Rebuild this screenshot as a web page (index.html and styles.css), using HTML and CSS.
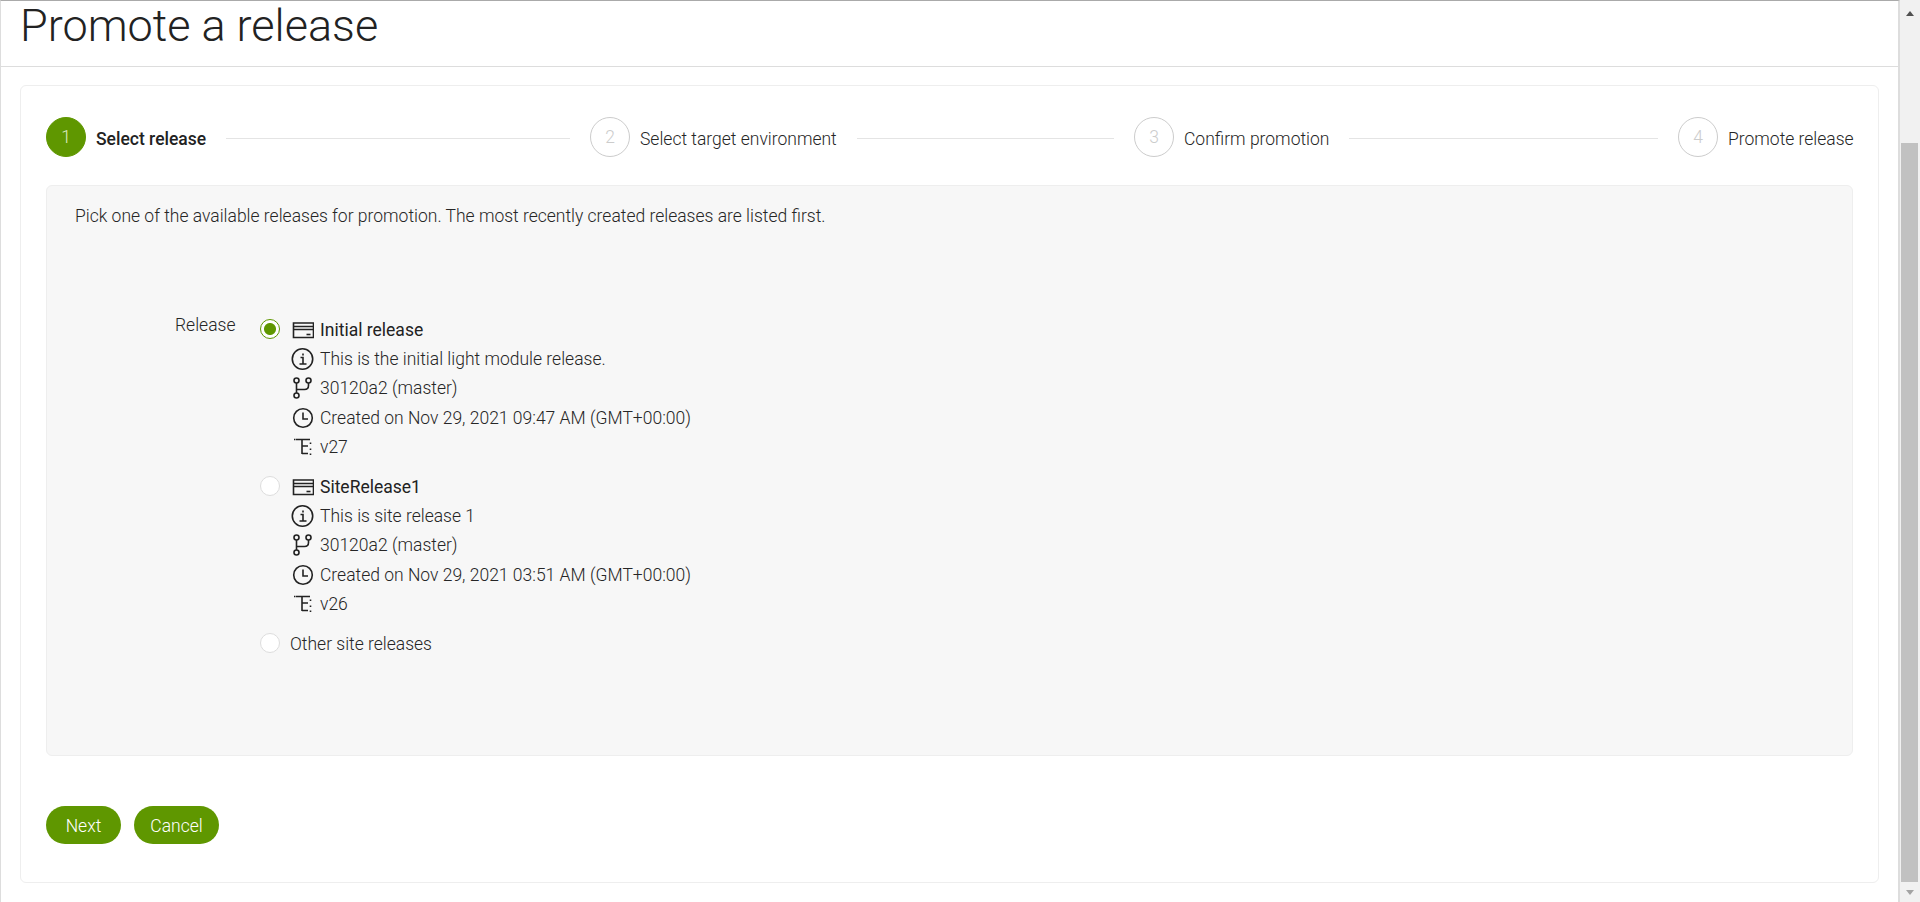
FILE: index.html
```html
<!DOCTYPE html>
<html lang="en">
<head>
<meta charset="UTF-8" />
<title>Promote a release</title>
<link rel="stylesheet" href="styles.css">
</head>
<body>

<div class="page">
  <main class="content">
    <header class="page-head">
      <h1>Promote a release</h1>
    </header>

    <section class="card">
      <ol class="steps">
        <li class="step active"><span class="num">1</span><span class="step-label">Select release</span><span class="line"></span></li>
        <li class="step"><span class="num">2</span><span class="step-label">Select target environment</span><span class="line"></span></li>
        <li class="step"><span class="num">3</span><span class="step-label">Confirm promotion</span><span class="line"></span></li>
        <li class="step last"><span class="num">4</span><span class="step-label">Promote release</span></li>
      </ol>

      <div class="panel">
        <p class="intro">Pick one of the available releases for promotion. The most recently created releases are listed first.</p>

        <div class="form-row">
          <div class="form-label">Release</div>
          <div class="options">

            <div class="option">
              <span class="radio checked"></span>
              <div class="details">
                <div class="row name">
                  <svg class="icon" viewBox="0 0 23 22"><path d="M2.500 4h20v14.500h-20zM2.500 7.500h20M2.500 10.500h20" /><path d="M15.500 15.500h4" /></svg>
                  Initial release
                </div>
                <div class="row">
                  <svg class="icon" viewBox="0 0 23 22"><circle cx="11.500" cy="11" r="10.200" /><path d="M9.500 9.500h2.500v6.500M8.500 16h7M12 5.500v2" /></svg>
                  This is the initial light module release.
                </div>
                <div class="row">
                  <svg class="icon" viewBox="0 0 23 22"><circle cx="5.500" cy="3.500" r="2.500" /><circle cx="5.500" cy="18.500" r="2.500" /><circle cx="17.500" cy="3.500" r="2.500" /><path d="M5.500 6v10M5.500 12.500h8q4 0 4-4V6" /></svg>
                  30120a2 (master)
                </div>
                <div class="row">
                  <svg class="icon" viewBox="0 0 23 22"><circle cx="12" cy="11" r="9.300" /><path d="M12 5.500V12h5" /></svg>
                  Created on Nov 29, 2021 09:47 AM (GMT+00:00)
                </div>
                <div class="row">
                  <svg class="icon" viewBox="0 0 23 22"><path d="M5 3.500h14M11 3.500V18M11 10h6M11 17.500h6M3 3.500h1.500M19.500 6.500V8M19.500 12.500V14M19.500 17.500V19" /></svg>
                  v27
                </div>
              </div>
            </div>

            <div class="option">
              <span class="radio"></span>
              <div class="details">
                <div class="row name">
                  <svg class="icon" viewBox="0 0 23 22"><path d="M2.500 4h20v14.500h-20zM2.500 7.500h20M2.500 10.500h20" /><path d="M15.500 15.500h4" /></svg>
                  SiteRelease1
                </div>
                <div class="row">
                  <svg class="icon" viewBox="0 0 23 22"><circle cx="11.500" cy="11" r="10.200" /><path d="M9.500 9.500h2.500v6.500M8.500 16h7M12 5.500v2" /></svg>
                  This is site release 1
                </div>
                <div class="row">
                  <svg class="icon" viewBox="0 0 23 22"><circle cx="5.500" cy="3.500" r="2.500" /><circle cx="5.500" cy="18.500" r="2.500" /><circle cx="17.500" cy="3.500" r="2.500" /><path d="M5.500 6v10M5.500 12.500h8q4 0 4-4V6" /></svg>
                  30120a2 (master)
                </div>
                <div class="row">
                  <svg class="icon" viewBox="0 0 23 22"><circle cx="12" cy="11" r="9.300" /><path d="M12 5.500V12h5" /></svg>
                  Created on Nov 29, 2021 03:51 AM (GMT+00:00)
                </div>
                <div class="row">
                  <svg class="icon" viewBox="0 0 23 22"><path d="M5 3.500h14M11 3.500V18M11 10h6M11 17.500h6M3 3.500h1.500M19.500 6.500V8M19.500 12.500V14M19.500 17.500V19" /></svg>
                  v26
                </div>
              </div>
            </div>

            <div class="option other">
              <span class="radio"></span>
              <div class="row">Other site releases</div>
            </div>

          </div>
        </div>
      </div>

      <div class="buttons">
        <button class="btn btn-next">Next</button>
        <button class="btn btn-cancel">Cancel</button>
      </div>
    </section>
  </main>

  <aside class="scrollbar">
    <span class="arrow up"></span>
    <div class="track"><div class="thumb"></div></div>
    <span class="arrow down"></span>
  </aside>
</div>

</body>
</html>
```

FILE: styles.css
```css
html, body {
  margin: 0;
  height: 902px;
  overflow: hidden;
}
body {
  font-family: Roboto, 'Liberation Sans', sans-serif;
  font-size: 17.500px;
  font-weight: 300;
  color: #262626;
  background: #fff;
}
.page {
  display: flex;
  height: 902px;
}
.content {
  flex: 1;
  border-top: 1px solid #aaa;
  border-left: 1px solid #ddd;
  border-right: 2px solid #ddd;
  min-width: 0;
}
.page-head {
  height: 65px;
  border-bottom: 1px solid #ddd;
  padding-left: 19px;
}
h1 {
  margin: 0;
  font-size: 45px;
  font-weight: 300;
  line-height: 50px;
  color: #222;
}
.card {
  margin: 18px 19px 0;
  height: 798px;
  box-sizing: border-box;
  padding: 31px 25px 0;
  border: 1px solid #eee;
  border-radius: 6px;
}
.steps {
  display: flex;
  list-style: none;
  margin: 0;
  padding: 0;
  height: 40px;
}
.step {
  flex: 0 0 544px;
  display: flex;
  align-items: center;
}
.step.last {
  flex: 1;
}
.num {
  flex: none;
  box-sizing: border-box;
  width: 40px;
  height: 40px;
  border: 1px solid #ccc;
  border-radius: 50%;
  display: flex;
  align-items: center;
  justify-content: center;
  color: #ccc;
}
.step-label {
  margin: 4px 0 0 10px;
  white-space: nowrap;
}
.line {
  flex: 1;
  height: 1px;
  background: #e4e4e4;
  margin: 2px 20px 0;
}
.active .num {
  background: #5f9700;
  border-color: #5f9700;
  color: #dcebc4;
}
.active .step-label {
  font-weight: 500;
  color: #222;
}
.panel {
  margin-top: 28px;
  height: 571px;
  box-sizing: border-box;
  padding: 19px 28px 0;
  background: #f7f7f7;
  border: 1px solid #eee;
  border-radius: 6px;
}
.intro {
  margin: 0;
  line-height: 22px;
}
.form-row {
  display: flex;
  margin-top: 88px;
}
.form-label {
  width: 185px;
  padding-left: 100px;
  box-sizing: border-box;
  line-height: 20px;
}
.option {
  display: flex;
  margin-bottom: 10.500px;
}
.radio {
  flex: none;
  box-sizing: border-box;
  width: 20px;
  height: 20px;
  margin: 4px 10px 0 0;
  background: #fff;
  border: 1px solid #ddd;
  border-radius: 50%;
}
.radio.checked {
  border-color: #5f9700;
  background: radial-gradient(circle, #5f9700 0 5.500px, #fff 6.500px);
}
.row {
  display: flex;
  align-items: center;
  height: 29.300px;
}
.name {
  font-weight: 400;
  color: #222;
}
.icon {
  flex: none;
  width: 23px;
  height: 22px;
  margin: 0 6px 0 1px;
  fill: none;
  stroke: #222;
  stroke-width: 1.600;
}
.buttons {
  display: flex;
  gap: 13px;
  margin-top: 50px;
}
.btn {
  height: 38px;
  padding: 1px 0 0;
  border: none;
  border-radius: 19px;
  background: #5f9700;
  color: #fff;
  font-family: inherit;
  font-size: 17.500px;
  font-weight: 300;
}
.btn-next {
  width: 75px;
}
.btn-cancel {
  width: 85px;
}
.scrollbar {
  flex: none;
  width: 20px;
  display: flex;
  flex-direction: column;
  background: #f1f1f1;
}
.arrow {
  flex: none;
  display: flex;
  align-items: center;
  justify-content: center;
}
.arrow::before {
  content: "";
  border-left: 4.500px solid transparent;
  border-right: 4.500px solid transparent;
}
.up {
  height: 26px;
}
.down {
  height: 20px;
}
.up::before {
  border-bottom: 5px solid #505050;
}
.down::before {
  border-top: 5px solid #a3a3a3;
}
.track {
  flex: 1;
  padding-top: 117px;
  min-height: 0;
}
.thumb {
  height: 100%;
  margin: 0 2px 0 1px;
  background: #c1c1c1;
}
```
